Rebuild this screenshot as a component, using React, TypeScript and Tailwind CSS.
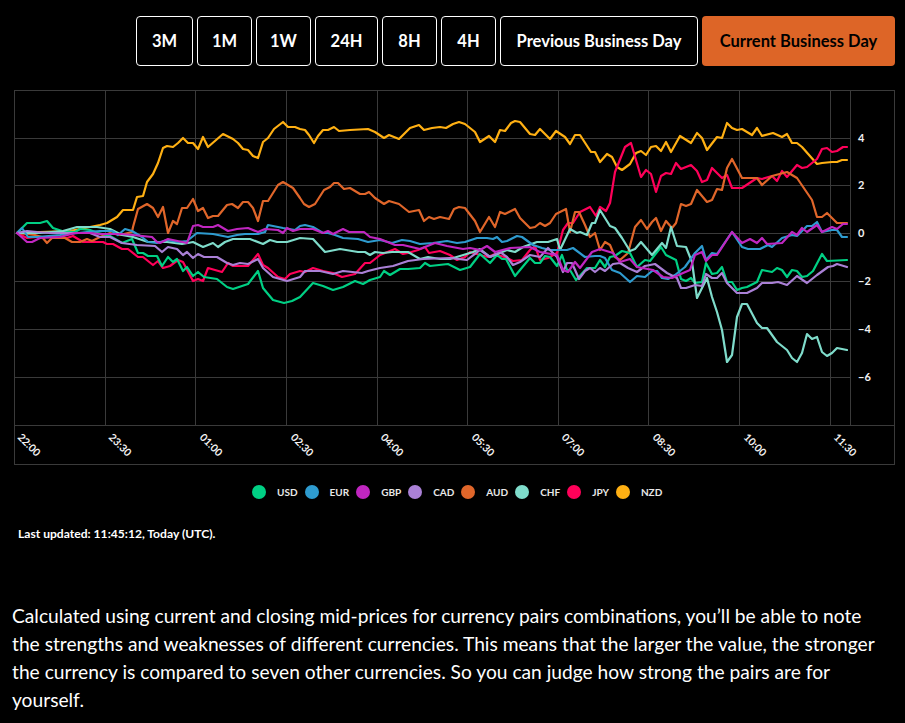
const ranges = [
  { label: '3M', width: 'w-[57px]' },
  { label: '1M', width: 'w-[55px]' },
  { label: '1W', width: 'w-[55px]' },
  { label: '24H', width: 'w-[63px]' },
  { label: '8H', width: 'w-[55px]' },
  { label: '4H', width: 'w-[55px]' },
  { label: 'Previous Business Day', width: 'w-[198px]' },
];

const legend = [
  { name: 'USD', dot: 'bg-[#00d084]' },
  { name: 'EUR', dot: 'bg-[#2e9bcf]' },
  { name: 'GBP', dot: 'bg-[#c026c0]' },
  { name: 'CAD', dot: 'bg-[#aa80d6]' },
  { name: 'AUD', dot: 'bg-[#e0662a]' },
  { name: 'CHF', dot: 'bg-[#7fdccb]' },
  { name: 'JPY', dot: 'bg-[#ff0059]' },
  { name: 'NZD', dot: 'bg-[#ffb013]' },
];

const gridX = [105, 195, 286, 377, 467, 558, 648, 739, 830];
const gridY = [138, 185, 233, 281, 329, 377];
const yTicks = [
  { y: 138, label: '4' },
  { y: 185, label: '2' },
  { y: 233, label: '0' },
  { y: 281, label: '−2' },
  { y: 329, label: '−4' },
  { y: 377, label: '−6' },
];
const xTicks = [
  { x: 17, label: '22:00' },
  { x: 108, label: '23:30' },
  { x: 199, label: '01:00' },
  { x: 290, label: '02:30' },
  { x: 380, label: '04:00' },
  { x: 471, label: '05:30' },
  { x: 561, label: '07:00' },
  { x: 652, label: '08:30' },
  { x: 743, label: '10:00' },
  { x: 833, label: '11:30' },
];

// traced from the chart, in page pixels
const series = [
  {
    color: '#ffb013',
    points:
      '17,233 40,232 70,231 100,225 107,223 117,217 123,210 133,210 137,197 143,196 147,182 153,174 158,163 163,148 167,146 173,147 178,143 183,138 188,143 193,143 198,149 203,137 208,147 223,134 233,139 238,143 243,149 248,150 253,156 258,158 263,142 268,138 274,129 283,122 288,127 295,127 300,129 305,130 309,135 314,143 318,136 323,130 328,130 334,127 339,131 350,130 368,129 375,132 384,138 389,135 399,139 410,128 419,125 424,130 432,128 440,127 446,128 453,124 459,122 465,124 475,132 480,142 489,136 495,142 500,130 505,131 511,123 515,121 520,122 530,134 535,135 540,129 550,139 556,131 565,137 570,144 575,135 580,135 591,152 595,152 600,162 607,154 612,157 617,167 622,170 630,164 636,153 641,151 646,155 651,147 656,146 661,151 666,142 671,152 680,136 691,143 697,133 702,138 707,150 717,137 722,138 727,123 732,128 737,130 742,129 752,135 757,128 762,136 773,133 782,137 787,134 792,143 797,143 802,147 817,164 822,163 832,162 837,162 842,160 847,160',
  },
  {
    color: '#ff0059',
    points:
      '17,233 27,238 37,237 50,237 67,238 73,236 83,242 90,242 103,242 107,244 113,244 122,249 128,249 138,257 143,257 153,265 158,261 163,268 170,266 178,260 183,262 193,281 198,279 203,281 208,268 222,272 228,263 233,266 248,266 258,254 263,265 268,268 278,277 285,279 290,274 300,271 305,272 313,268 323,271 333,273 342,277 355,274 365,263 370,263 380,255 395,249 403,254 408,253 418,250 425,247 429,253 440,251 450,255 457,260 465,257 470,252 480,255 488,257 495,254 507,258 513,261 522,260 530,250 535,246 540,260 548,258 557,253 563,230 568,223 573,223 580,212 590,207 596,216 600,207 606,211 610,203 615,172 625,147 631,143 641,177 646,170 651,174 656,192 661,176 666,173 671,174 676,163 681,169 691,165 697,171 702,182 707,180 712,168 722,178 727,175 732,188 742,188 757,178 762,179 772,176 777,181 782,171 787,177 797,165 802,168 807,167 817,159 822,149 827,148 832,152 837,151 843,147 847,147',
  },
  {
    color: '#e0662a',
    points:
      '17,233 35,235 42,237 47,243 52,238 65,238 72,242 80,242 87,239 92,241 100,237 110,233 120,235 132,232 133,227 138,209 147,204 153,208 158,217 163,207 168,233 173,221 177,224 182,208 187,208 193,199 198,211 203,208 208,218 213,216 218,216 227,205 232,204 238,208 243,202 248,202 253,208 258,221 263,201 268,201 278,185 283,182 293,188 300,198 304,204 309,207 315,204 324,190 330,187 334,183 338,183 344,189 350,188 360,194 365,194 369,192 375,198 384,204 389,201 399,204 409,212 419,210 424,221 429,217 434,219 440,217 449,219 454,209 459,207 465,208 475,221 480,232 489,217 495,227 500,212 505,214 515,209 520,218 530,228 535,227 540,223 545,226 550,223 556,214 566,209 570,232 575,212 579,212 585,225 590,237 595,233 600,250 605,242 610,245 615,257 620,260 628,253 635,227 641,220 647,229 652,222 656,218 661,231 666,221 672,228 676,223 681,204 686,206 691,204 697,190 707,202 712,200 717,189 722,190 727,168 732,159 742,178 752,178 757,178 762,185 772,176 787,172 797,178 812,200 817,217 822,217 827,213 837,223 847,223',
  },
  {
    color: '#00d084',
    points:
      '17,233 27,223 40,223 47,221 53,228 62,231 75,232 80,229 90,230 98,233 110,236 122,243 132,239 138,253 143,253 148,256 157,256 162,266 168,257 173,262 177,259 183,271 187,267 193,276 198,272 204,277 217,279 227,287 233,289 242,286 248,284 258,271 263,288 273,300 284,303 292,301 300,297 313,283 323,286 333,290 343,287 355,281 363,284 370,280 380,277 384,271 390,275 400,269 408,269 420,268 425,263 430,266 448,264 460,270 470,267 480,254 490,263 497,255 502,259 506,259 515,276 530,258 535,263 540,263 545,256 550,257 557,266 562,255 567,270 570,270 576,280 587,268 595,268 600,260 605,267 610,257 615,256 622,251 630,253 637,267 645,260 650,261 661,247 666,255 676,260 681,279 686,281 691,278 695,283 702,282 706,263 712,274 717,273 722,267 727,282 732,282 737,290 742,288 747,287 757,282 762,270 772,272 777,268 782,270 787,277 792,270 797,271 802,277 807,276 813,271 822,254 827,261 847,260',
  },
  {
    color: '#7fdccb',
    points:
      '17,233 27,233 40,233 63,231 77,227 97,227 110,229 122,235 133,237 148,242 167,242 182,244 188,243 193,242 203,247 213,243 218,247 225,242 233,239 250,239 263,244 270,240 277,242 287,242 300,238 313,239 325,252 340,249 358,252 365,252 370,255 375,252 383,253 392,252 408,252 420,259 428,257 440,259 450,259 460,256 473,252 480,249 490,257 507,250 515,252 523,247 537,242 548,242 557,239 560,250 570,229 577,233 580,232 587,235 592,223 595,223 600,210 610,226 615,228 622,238 630,251 635,249 641,242 652,255 662,243 666,248 671,227 677,246 686,247 692,262 697,298 707,278 712,297 717,312 722,330 727,362 732,355 737,317 742,304 747,304 757,323 762,328 767,328 777,342 787,350 792,358 797,362 802,353 807,334 812,339 817,337 822,352 827,356 832,353 837,348 842,349 847,350',
  },
  {
    color: '#2e9bcf',
    points:
      '17,233 22,228 28,237 37,237 60,235 87,232 100,231 112,231 118,235 125,229 132,231 142,237 148,242 157,243 167,240 178,242 187,241 197,233 213,234 228,237 237,235 245,234 258,234 265,232 268,225 283,228 295,230 300,226 305,225 313,227 323,233 328,233 335,235 343,238 358,239 368,242 380,240 392,243 402,240 410,241 420,244 433,243 447,241 457,243 465,242 477,238 487,238 493,239 497,237 502,242 507,241 517,236 522,237 533,245 542,248 550,250 560,250 567,250 573,248 585,257 595,256 600,256 605,258 612,270 620,273 630,282 637,276 645,277 652,271 657,271 662,278 668,279 675,275 685,267 695,253 702,246 706,260 712,253 717,254 732,232 742,247 748,249 760,249 768,245 772,247 782,238 792,235 797,236 807,226 812,226 817,222 822,232 832,230 837,230 842,237 847,237',
  },
  {
    color: '#aa80d6',
    points:
      '17,233 27,231 37,232 50,233 77,233 90,233 100,237 110,237 122,243 137,245 155,246 162,252 168,247 177,249 183,255 187,252 193,258 198,254 204,257 217,257 227,263 233,265 240,263 248,264 258,259 263,268 273,277 287,281 300,277 305,271 320,271 333,274 343,271 362,273 368,271 380,268 393,266 408,261 423,259 450,258 467,260 480,250 490,257 500,252 507,257 513,265 520,262 530,255 540,257 548,248 557,257 563,272 567,263 572,263 579,279 585,271 590,268 595,272 600,268 605,271 613,264 620,263 628,268 637,272 645,266 655,264 667,273 677,278 681,288 686,288 695,285 702,286 706,274 712,278 717,278 722,273 727,283 737,293 747,293 757,288 762,283 772,283 778,282 787,285 797,276 807,283 817,275 828,267 833,266 837,264 847,267',
  },
  {
    color: '#c026c0',
    points:
      '17,233 27,242 32,242 40,238 60,237 75,233 90,233 100,234 120,234 133,235 152,237 157,242 160,243 168,239 187,243 193,226 198,225 203,227 213,227 218,225 228,231 237,229 248,228 258,232 265,229 278,230 283,233 287,228 293,231 300,229 313,229 323,233 328,231 333,234 343,229 349,232 364,232 370,237 380,239 395,245 403,245 420,249 435,243 447,246 463,249 470,248 480,250 487,246 495,252 510,248 530,247 540,252 557,255 563,270 568,272 575,262 580,268 592,252 600,249 613,253 620,262 630,259 637,267 653,270 663,277 672,278 683,273 690,270 695,255 702,252 706,261 712,255 717,255 732,232 742,243 750,239 757,243 762,238 767,244 782,243 792,232 797,235 802,228 807,232 817,225 822,232 832,227 837,229 843,224 847,224',
  },
];

const font = { fontFamily: 'Lato, sans-serif' };

export default function App() {
  return (
    <div className="h-[723px] overflow-hidden bg-black text-white font-['Lato',sans-serif]">
      <div className="flex justify-end gap-1 pt-4 pr-[10px]">
        {ranges.map((r) => (
          <button
            key={r.label}
            className={`${r.width} h-[50px] rounded border border-white bg-black text-[16.5px] font-bold text-white`}
          >
            {r.label}
          </button>
        ))}
        <button className="h-[50px] w-[193px] rounded bg-[#dd6527] text-[16.5px] font-bold text-black">
          Current Business Day
        </button>
      </div>

      <div className="mt-[24px] pl-[14px]">
        <svg width="881" height="375" viewBox="14 90 881 375" className="block">
          <g stroke="#3a3a3a" strokeWidth="1" shapeRendering="crispEdges">
            <rect x="14.5" y="90.5" width="880" height="374" fill="none" />
            <line x1="14.5" y1="425.5" x2="894.5" y2="425.5" />
            <line x1="850.5" y1="90.5" x2="850.5" y2="425.5" />
            {gridX.map((x) => (
              <line key={x} x1={x + 0.5} y1="90.5" x2={x + 0.5} y2="425.5" />
            ))}
            {gridY.map((y) => (
              <line key={y} x1="14.5" y1={y + 0.5} x2="850.5" y2={y + 0.5} />
            ))}
          </g>
          {series.map((s) => (
            <polyline
              key={s.color}
              points={s.points}
              fill="none"
              stroke={s.color}
              strokeWidth="2.2"
              strokeLinejoin="round"
              strokeLinecap="round"
            />
          ))}
          {yTicks.map((t) => (
            <text key={t.label} x="858" y={t.y + 4} fill="#f2f2f2" fontSize="11" fontWeight="700" style={font}>
              {t.label}
            </text>
          ))}
          {xTicks.map((t) => (
            <text
              key={t.label}
              x={t.x}
              y="438"
              fill="#f2f2f2"
              fontSize="10.5"
              fontWeight="700"
              style={font}
              transform={`rotate(45 ${t.x} 438)`}
            >
              {t.label}
            </text>
          ))}
        </svg>
      </div>

      <div className="mt-[19px] ml-[252px] flex h-[16px] items-center">
        {legend.map((l) => (
          <div key={l.name} className="flex items-center">
            <span className={`h-[14px] w-[14px] rounded-full ${l.dot}`} />
            <span className="ml-[11px] mr-[7px] text-[10px] font-bold text-[#e8e8e8]">{l.name}</span>
          </div>
        ))}
      </div>

      <p className="mt-[25px] ml-[18px] text-[12.1px] leading-[18px] font-bold">Last updated: 11:45:12, Today (UTC).</p>

      <p className="mt-[59px] ml-[12px] w-[870px] text-[19.2px] leading-[28px] text-white">
        Calculated using current and closing mid-prices for currency pairs combinations, you’ll be able to note the
        strengths and weaknesses of different currencies. This means that the larger the value, the stronger the
        currency is compared to seven other currencies. So you can judge how strong the pairs are for yourself.
      </p>
    </div>
  );
}
